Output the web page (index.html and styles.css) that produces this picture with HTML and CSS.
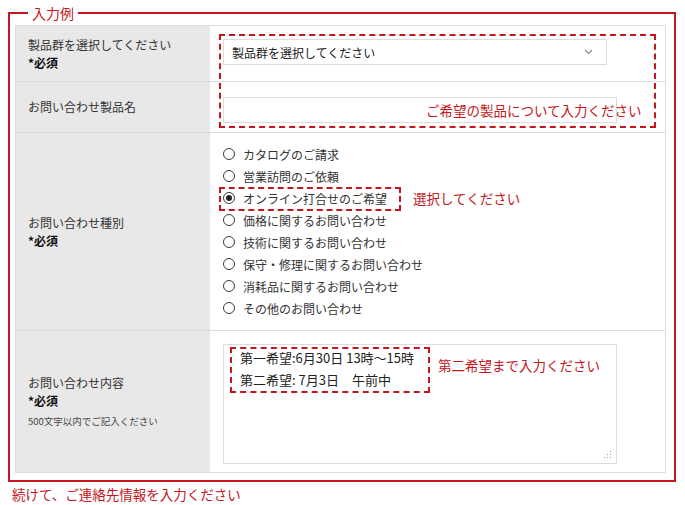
FILE: index.html
```html
<!DOCTYPE html>
<html lang="ja">
<head>
<meta charset="utf-8">
<title>入力例</title>
<link rel="stylesheet" href="styles.css">
</head>
<body>
<div class="example">
  <span class="example-title">入力例</span>
  <div class="form">
    <div class="row row-1">
      <div class="label">
        <span>製品群を選択してください</span>
        <strong class="req">*必須</strong>
      </div>
      <div class="value">
        <div class="select">
          <span>製品群を選択してください</span>
          <svg class="chevron" width="9" height="6" viewBox="0 0 9 6"><path d="M1 1 L4.5 4.5 L8 1" fill="none" stroke="#8a8a8a" stroke-width="1.2"/></svg>
        </div>
      </div>
    </div>
    <div class="row row-2">
      <div class="label">
        <span>お問い合わせ製品名</span>
      </div>
      <div class="value">
        <div class="input"></div>
      </div>
    </div>
    <div class="row row-3">
      <div class="label">
        <span>お問い合わせ種別</span>
        <strong class="req">*必須</strong>
      </div>
      <div class="value">
        <ul class="radios">
          <li class="radio"><span class="circle"></span>カタログのご請求</li>
          <li class="radio"><span class="circle"></span>営業訪問のご依頼</li>
          <li class="radio radio-checked"><span class="circle"></span>オンライン打合せのご希望<span class="dash-box dash-radio"></span><span class="hint hint-radio">選択してください</span></li>
          <li class="radio"><span class="circle"></span>価格に関するお問い合わせ</li>
          <li class="radio"><span class="circle"></span>技術に関するお問い合わせ</li>
          <li class="radio"><span class="circle"></span>保守・修理に関するお問い合わせ</li>
          <li class="radio"><span class="circle"></span>消耗品に関するお問い合わせ</li>
          <li class="radio"><span class="circle"></span>その他のお問い合わせ</li>
        </ul>
      </div>
    </div>
    <div class="row row-4">
      <div class="label">
        <span>お問い合わせ内容</span>
        <strong class="req">*必須</strong>
        <small class="note">500文字以内でご記入ください</small>
      </div>
      <div class="value">
        <div class="textarea-wrap">
          <textarea class="textarea">第一希望:6月30日 13時～15時
第二希望: 7月3日　午前中</textarea>
          <svg class="grip" width="8" height="8" viewBox="0 0 8 8">
            <rect x="6" y="0" width="1" height="1" fill="#9a9a9a"/>
            <rect x="3" y="3" width="1" height="1" fill="#9a9a9a"/>
            <rect x="6" y="3" width="1" height="1" fill="#9a9a9a"/>
            <rect x="0" y="6" width="1" height="1" fill="#9a9a9a"/>
            <rect x="3" y="6" width="1" height="1" fill="#9a9a9a"/>
            <rect x="6" y="6" width="1" height="1" fill="#9a9a9a"/>
          </svg>
        </div>
      </div>
    </div>
    <span class="dash-box dash-product"></span>
    <span class="hint hint-product">ご希望の製品について入力ください</span>
    <span class="dash-box dash-content"></span>
    <span class="hint hint-content">第二希望まで入力ください</span>
  </div>
</div>
<p class="next">続けて、ご連絡先情報を入力ください</p>
</body>
</html>
```
FILE: styles.css
```css
* { box-sizing: border-box; }
html, body { margin: 0; padding: 0; background: #fff; }
body {
  font-family: "Noto Sans CJK JP", "Noto Sans", sans-serif;
  color: #333;
  font-size: 12px;
  padding-top: 12px;
}
.example {
  position: relative;
  margin: 0 9px 0 8px;
  border: 2px solid #c4161c;
  padding: 11px 8px 7px 5px;
}
.example-title {
  position: absolute;
  top: -10px;
  left: 18px;
  background: #fff;
  padding: 0 4px;
  font-size: 14px;
  line-height: 18px;
  color: #c4161c;
}
.form {
  position: relative;
  border: 1px solid #dcdcdc;
}
.row {
  display: grid;
  grid-template-columns: 194px 1fr;
  border-bottom: 1px solid #dcdcdc;
}
.row-4 { border-bottom: 0; }
.label {
  background: #e8e8e8;
  padding: 0 12px;
  display: flex;
  flex-direction: column;
  justify-content: center;
  line-height: 18px;
  font-size: 12px;
  color: #333;
}
.req {
  font-weight: 700;
  color: #111;
  font-size: 12px;
}
.note {
  font-size: 9.5px;
  line-height: 18px;
  margin-top: 2px;
  color: #444;
}
.value {
  background: #fff;
  padding-left: 13px;
}
.row-1 .value { padding-top: 13px; padding-bottom: 16px; }
.row-2 .value { padding-top: 15px; padding-bottom: 9px; }
.row-3 .value { padding-top: 10px; padding-bottom: 11px; }
.row-4 .value { padding-top: 13px; padding-bottom: 8px; }
.select {
  width: 384px;
  height: 26px;
  border: 1px solid #dcdcdc;
  display: flex;
  align-items: center;
  justify-content: space-between;
  padding: 0 13px 0 8px;
  font-size: 12px;
  color: #222;
}
.input {
  width: 394px;
  height: 26px;
  border: 1px solid #dcdcdc;
}
.radios {
  list-style: none;
  margin: 0;
  padding: 0;
}
.radio {
  position: relative;
  display: flex;
  align-items: center;
  height: 22px;
  font-size: 12px;
  color: #333;
}
.circle {
  width: 12px;
  height: 12px;
  border: 1px solid #3a3a3a;
  border-radius: 50%;
  margin-right: 8px;
  display: flex;
  align-items: center;
  justify-content: center;
  background: #fff;
}
.radio-checked .circle::after {
  content: "";
  width: 6px;
  height: 6px;
  border-radius: 50%;
  background: #222;
}
.textarea-wrap {
  position: relative;
  width: 394px;
  height: 120px;
}
.textarea {
  display: block;
  width: 394px;
  height: 120px;
  border: 1px solid #dcdcdc;
  padding: 2px 16px;
  font-family: "Noto Sans CJK JP", "Noto Sans", sans-serif;
  font-size: 13px;
  line-height: 22px;
  color: #222;
  resize: none;
  margin: 0;
  outline: none;
}
.grip {
  position: absolute;
  right: 5px;
  bottom: 5px;
}
.dash-box {
  position: absolute;
  border: 2px dashed #c4161c;
  pointer-events: none;
}
.hint {
  position: absolute;
  color: #c4161c;
  font-size: 13.5px;
  line-height: 18px;
  white-space: nowrap;
}
.dash-radio { left: -4px; top: 0; width: 182px; height: 24px; }
.hint-radio { left: 190px; top: 2px; }
.dash-product { left: 203px; top: 8px; width: 437px; height: 94px; }
.hint-product { left: 410px; top: 75px; }
.dash-content { left: 214px; top: 321px; width: 200px; height: 46px; }
.hint-content { left: 422px; top: 330px; }
.next {
  margin: 3px 0 0;
  padding-left: 12px;
  color: #c4161c;
  font-size: 13.5px;
  line-height: 18px;
}
```
